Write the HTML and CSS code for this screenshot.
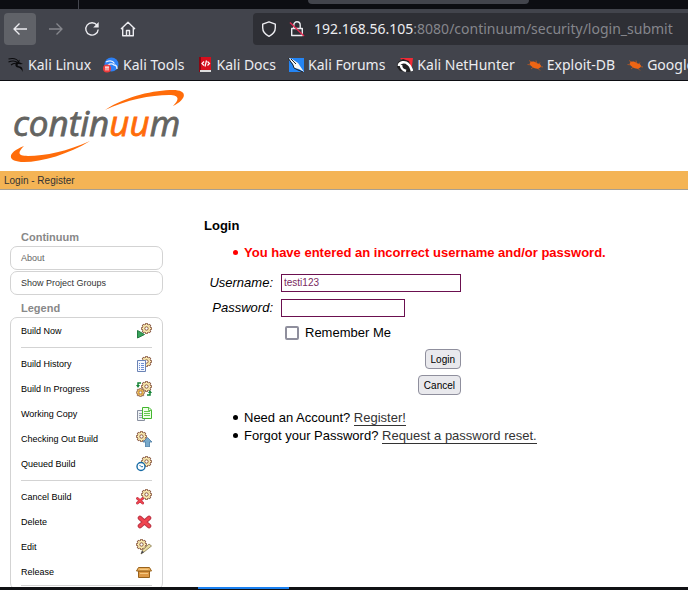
FILE: index.html
```html
<!DOCTYPE html>
<html lang="en">
<head>
<meta charset="utf-8">
<title>Continuum - Login</title>
<link rel="stylesheet" href="styles.css">
</head>
<body>
<svg class="defs" aria-hidden="true">
  <defs>
    <g id="gear">
      <path d="M5.500 0v11M0 5.500h11M1.600 1.600l7.800 7.800M9.400 1.600l-7.800 7.800" stroke="#8a5a44" stroke-width="2.600"/>
      <circle cx="5.500" cy="5.500" r="4.200" fill="#f9e9ae" stroke="#8a5a44" stroke-width=".8"/>
      <path d="M5.500 .8v9.400M.8 5.500h9.400M2.200 2.200l6.600 6.600M8.800 2.200l-6.600 6.600" stroke="#f9e9ae" stroke-width="1.100"/>
      <circle cx="5.500" cy="5.500" r="1.700" fill="#fff" stroke="#8a5a44"/>
    </g>
    <g id="cross">
      <path d="M2.500 2.500L11.500 10.500M11.500 2.500L2.500 10.500" stroke="#b93445" stroke-width="4.600" stroke-linecap="round"/>
      <path d="M2.500 2.500L11.500 10.500M11.500 2.500L2.500 10.500" stroke="#f0444f" stroke-width="2.800" stroke-linecap="round"/>
    </g>
    <g id="bug">
      <path d="M2 3.500L6 6M.5 7.500L5 8M4 12L7 9.500M9 3.500L9.500 6M13 5.500L12 8M16 10L12 9.500M13 13.500L10.500 11" stroke="#c2581c" stroke-width=".8"/>
      <path d="M3 5.500C5 4 8 4.500 10 6.200C13 6.400 15 8.500 13.500 10C12 12.600 8 12 5.500 10C3.500 8.500 2 7 3 5.500Z" fill="#ee6514"/>
    </g>
  </defs>
</svg>

<div class="tabstrip"><span class="tab-end"></span><span class="tab-line"></span></div>
<header class="browser">
  <nav class="toolbar" aria-label="Browser">
    <button class="tool tool-active" type="button" aria-label="Back">
      <svg width="16" height="16" viewBox="0 0 16 16"><path d="M15 8H2M7.500 2.500L2 8l5.500 5.500"/></svg>
    </button>
    <button class="tool tool-dim" type="button" aria-label="Forward">
      <svg width="16" height="16" viewBox="0 0 16 16"><path d="M1 8H14M8.500 2.500L14 8l-5.500 5.500"/></svg>
    </button>
    <button class="tool" type="button" aria-label="Reload">
      <svg width="16" height="16" viewBox="0 0 16 16"><path d="M13 4.200A6.200 6.200 0 1 0 14.200 8.500"/><path class="solid" d="M14.700 1v5.500H9.200z"/></svg>
    </button>
    <button class="tool" type="button" aria-label="Home">
      <svg width="16" height="16" viewBox="0 0 16 16"><path d="M1 8L8 1.200l7 6.800M2.700 6.800v7.900h10.600v-7.900M6.500 14.500V9.500h3v5"/></svg>
    </button>
    <div class="address">
      <svg width="16" height="16" viewBox="0 0 16 16"><path d="M8 .8l6.300 2.400v3.600c0 4-2.500 6.700-6.300 8.500C4.200 13.500 1.700 10.800 1.700 6.800V3.200z"/></svg>
      <svg width="16" height="16" viewBox="0 0 16 16"><path d="M4.800 7V4a3.200 3.200 0 0 1 6.400 0v3M2.700 7.500h10.600v7H2.700z"/><path class="strike" d="M1 1.500L15 15"/></svg>
      <span class="url"><b>192.168.56.105</b>:8080/continuum/security/login_submit</span>
    </div>
  </nav>
  <nav class="bookmarks" aria-label="Bookmarks">
    <a href="#"><svg width="16" height="16" viewBox="0 0 16 16"><path d="M.5 2C5 .8 9 2 11 5M.5 5C4 3.500 8 4 10 6M3 8C6 5.500 9 6 10 7" fill="none" stroke="#0b0b0d" stroke-width="1.100"/><path d="M9 5l3-2.500-1 2.500 4 2L12 7.200C9 6.500 8.500 8.600 11 9.200c3 .4 4 2 3.500 5.800-1-3-2-3.600-4.500-4.400C7 10 6.500 7 9 5z" fill="#0b0b0d"/></svg>Kali Linux</a>
    <a href="#"><svg width="16" height="16" viewBox="0 0 16 16"><circle cx="8.500" cy="7.500" r="7" fill="#2d80f5"/><path d="M3 5c4-2 7-1 8.500 1.500M5 8c3-2 5-1 6 0 3 0 3 3 3 4" fill="none" stroke="#e8f1ff" stroke-width="1.300"/><circle cx="4" cy="11.500" r="4" fill="#ef3b3b"/><path d="M2 10h4M3 10v3.500M5 10v3.500" stroke="#fff"/></svg>Kali Tools</a>
    <a href="#"><svg width="16" height="16" viewBox="0 0 16 16"><path d="M2 0h12v13H2z" fill="#d70f1d"/><path d="M2 0h2v15H2z" fill="#8a0712"/><path d="M3 13h11v2H3z" fill="#ddd"/><path d="M7 4.500L5 6.500l2 2M10.500 4.500l2 2-2 2M9.500 3.500l-1.500 6" fill="none" stroke="#fff" stroke-width="1.200"/></svg>Kali Docs</a>
    <a href="#"><svg width="16" height="16" viewBox="0 0 16 16"><path d="M1 1h15v14H1z" fill="#2485f5"/><path d="M0 1l4 1 6 4 2 3 4 6-5-3-5-1-1-4z" fill="#f6f6f6"/><path d="M0 1l5 7 1 3 4 2 5 2M3 2l5 5" fill="none" stroke="#222"/></svg>Kali Forums</a>
    <a href="#"><svg width="16" height="16" viewBox="0 0 16 16"><path d="M3 1h13l-1.500 12z" fill="#f02a35"/><path d="M1 5l5-3 6 2 3 10-3 1-9-1-3-4z" fill="#202022"/><path d="M2 9c0-4 6-5 9-2 3 2 3 4 4 7M4 8c0 4 2 5 5 6" fill="none" stroke="#fff" stroke-width="2.600"/></svg>Kali NetHunter</a>
    <a href="#"><svg width="16" height="16" viewBox="0 0 16 16"><use href="#bug"/></svg>Exploit-DB</a>
    <a href="#"><svg width="16" height="16" viewBox="0 0 16 16"><use href="#bug"/></svg>Google Hacking DB</a>
  </nav>
</header>

<div class="page">
  <div class="banner">
    <svg width="176" height="76" viewBox="0 0 176 76" role="img" aria-label="continuum">
      <path d="M95 20C116 6 145 0 163 0c15 0 14 9 0 16 7-7 6-11-4-11-18 0-43 5-64 15z" fill="#ff6c0a"/>
      <path d="M80 51C59 64 32 72 14 72c-17 0-18-9 0-16-7 7-6 10 4 10 17 0 40-5 62-15z" fill="#ff6c0a"/>
      <text class="wordmark" x="3" y="46">contin<tspan class="accent">uu</tspan>m</text>
    </svg>
  </div>
  <div class="crumbs"><a href="#">Login</a> - <a href="#">Register</a></div>

  <div class="columns">
    <aside class="sidebar">
      <h2>Continuum</h2>
      <a class="menu-link muted" href="#">About</a>
      <a class="menu-link" href="#">Show Project Groups</a>
      <h2>Legend</h2>
      <div class="legend">
        <div class="entry">Build Now<svg width="16" height="16" viewBox="0 0 16 16"><use href="#gear" x="5"/><path d="M1.500 7.500l7 4-7 3.500z" fill="#39a35c" stroke="#247b40"/></svg></div>
        <hr>
        <div class="entry">Build History<svg width="16" height="16" viewBox="0 0 16 16"><use href="#gear" x="5"/><path d="M1.500 4.500h8v11h-8z" fill="#f5f8ff" stroke="#6b83b5"/><path d="M3 7.500h1m1 0h3M3 9.500h1m1 0h3M3 11.500h1m1 0h3M3 13.500h1m1 0h3" stroke="#6d8fd1"/></svg></div>
        <div class="entry">Build In Progress<svg width="16" height="16" viewBox="0 0 16 16"><use href="#gear" x="5"/><g transform="translate(0 7) scale(.82)"><use href="#gear"/><circle cx="5.500" cy="5.500" r="2.800" fill="none" stroke="#e0a840" stroke-width="1.500"/></g><path d="M5 2H2v3M11 14h3v-3" fill="none" stroke="#168437" stroke-width="1.500"/><path d="M0 4h4L2 7zM12 12h4l-2-3z" fill="#168437"/></svg></div>
        <div class="entry">Working Copy<svg width="16" height="16" viewBox="0 0 16 16"><path d="M1.500 4.500h7v10h-7z" fill="#eef2f5" stroke="#888f9f"/><path d="M3 7.500h4M3 9.500h4M3 11.500h4" stroke="#97a0b4"/><path d="M6.500 1.500H13l2.500 2.500v8.500h-9z" fill="#efffe9" stroke="#43b62f"/><path d="M8 5.500h6M8 7.500h6M8 9.500h6M12.500 1.500v3h3" fill="none" stroke="#65c651"/></svg></div>
        <div class="entry">Checking Out Build<svg width="16" height="16" viewBox="0 0 16 16"><use href="#gear"/><path d="M11.500 6.500L16 11h-2.500v5h-4v-5H7z" fill="#79aacb" stroke="#4d7ca3" stroke-width=".8"/></svg></div>
        <div class="entry">Queued Build<svg width="16" height="16" viewBox="0 0 16 16"><use href="#gear" x="5"/><circle cx="5" cy="10.500" r="4" fill="#fff" stroke="#176ba5" stroke-width="1.400"/><path d="M3.500 9l1.700 1.700H7" fill="none" stroke="#176ba5"/></svg></div>
        <hr>
        <div class="entry">Cancel Build<svg width="16" height="16" viewBox="0 0 16 16"><use href="#gear" x="5"/><g transform="translate(0 8) scale(.58)"><use href="#cross"/></g></svg></div>
        <div class="entry">Delete<svg width="16" height="16" viewBox="0 0 16 16"><use href="#cross" x="1.500" y="1.500"/></svg></div>
        <div class="entry">Edit<svg width="16" height="16" viewBox="0 0 16 16"><use href="#gear"/><path d="M5 15l1.500-4L13 5l2.500 2L8 13z" fill="#e8dba0" stroke="#85764b" stroke-width=".8"/><path d="M5 15l1-3 2 1z" fill="#333850"/></svg></div>
        <div class="entry">Release<svg width="16" height="16" viewBox="0 0 16 16"><path d="M2.500 7h11v6.500h-11z" fill="#dd9845" stroke="#98621c"/><path d="M2.500 3.500h11L15.500 7h-15z" fill="#edb25e" stroke="#98621c"/><path d="M4 5.500h8M4 9.500h8" stroke="#f6c981"/></svg></div>
        <hr class="tight">
      </div>
    </aside>

    <main class="content">
      <h1>Login</h1>
      <ul class="errors"><li>You have entered an incorrect username and/or password.</li></ul>
      <form class="login">
        <label for="username">Username:</label>
        <input class="field" id="username" type="text" value="testi123">
        <label for="password">Password:</label>
        <input class="field field-short" id="password" type="password">
        <div class="remember"><input id="remember" type="checkbox"><label for="remember">Remember Me</label></div>
        <div class="actions"><button type="submit">Login</button><button type="button">Cancel</button></div>
      </form>
      <ul class="help">
        <li>Need an Account? <a href="#">Register!</a></li>
        <li>Forgot your Password? <a href="#">Request a password reset.</a></li>
      </ul>
    </main>
  </div>
</div>
<footer class="taskbar"><span class="task"></span></footer>
</body>
</html>
```
FILE: styles.css
```css
* { box-sizing: border-box; }
body {
  margin: 0;
  height: 100vh;
  display: flex;
  flex-direction: column;
  overflow: hidden;
  background: #fff;
  color: #000;
  font: 13px/18px "Liberation Sans", Arial, sans-serif;
}
svg { flex: none; display: block; }
.defs { position: absolute; width: 0; height: 0; }

/* Browser frame */
.tabstrip {
  flex: none;
  display: flex;
  height: 9px;
  background: #0c0d12;
}
.tab-end { width: 79px; border-right: 1px solid #44464e; }
.tab-line { width: 221px; height: 4px; margin-left: 229px; background: #42444c; border-radius: 0 0 4px 4px; }
.browser {
  flex: none;
  background: #42444c;
  border-bottom: 1px solid #0c0d12;
  color: #ececf0;
  font: 14px/20px "Noto Sans", sans-serif;
}
.toolbar { display: flex; gap: 4px; padding: 4px 0 4px 4px; }
.tool {
  flex: none;
  display: flex;
  align-items: center;
  justify-content: center;
  width: 32px;
  height: 32px;
  padding: 0;
  border: 0;
  border-radius: 4px;
  background: none;
}
.tool-active { background: #606268; }
.tool-dim { opacity: .4; }
.toolbar svg { fill: none; stroke: #ececf0; stroke-width: 1.4; stroke-linejoin: round; }
.toolbar .solid { fill: #ececf0; stroke: none; }
.toolbar .strike { stroke: #e22850; }
.address {
  flex: 1;
  min-width: 0;
  display: flex;
  align-items: center;
  gap: 12px;
  height: 32px;
  margin-left: 105px;
  padding-left: 8px;
  border-radius: 4px 0 0 4px;
  background: #2e2f35;
  overflow: hidden;
}
.url { margin-left: -3px; color: #85868c; white-space: nowrap; }
.url b { color: #ececf0; font-weight: 400; }
.bookmarks {
  display: flex;
  gap: 12px;
  height: 31px;
  padding: 0 0 0 8px;
  align-items: center;
  overflow: hidden;
}
.bookmarks a {
  flex: none;
  display: flex;
  align-items: center;
  gap: 4px;
  color: #ececf0;
  text-decoration: none;
}

/* Continuum page */
.page { flex: 1; min-height: 0; overflow: hidden; }
.banner { padding: 9px 10px 5px; }
.wordmark {
  fill: #646461;
  stroke: #646461;
  stroke-width: .8;
  font: italic 35px "Open Sans", sans-serif;
}
.accent { fill: #ff6c0a; stroke: #ff6c0a; }
.crumbs {
  height: 19px;
  padding: 0 4px;
  background: #f4b455;
  border-bottom: 1px solid #a79f91;
  color: #333;
  font-size: 10px;
  line-height: 20px;
}
.crumbs a { color: #333; text-decoration: none; }
.columns { display: flex; align-items: flex-start; }
.sidebar {
  flex: none;
  width: 153px;
  margin: 35px 41px 0 10px;
  font-size: 9px;
}
.sidebar h2 {
  margin: 0;
  padding: 3px 11px 0;
  color: #888;
  font-size: 11px;
  line-height: 18px;
}
.menu-link {
  display: block;
  height: 24px;
  margin-bottom: 1px;
  padding-left: 10px;
  border: 1px solid #d3d3d3;
  border-radius: 7px;
  color: #333;
  line-height: 22px;
  text-decoration: none;
}
.menu-link.muted { color: #666; }
.legend {
  padding: 0 10px;
  border: 1px solid #d3d3d3;
  border-radius: 7px;
}
.entry { display: flex; align-items: center; justify-content: space-between; height: 25px; }
.legend hr { height: 1px; margin: 4px 0 3px; border: 0; background: #d3d3d3; }
.legend .tight { margin-top: 1px; }

.content { flex: 1; min-width: 0; padding-top: 27px; }
.content h1 { margin: 0; font-size: 13px; line-height: 18px; }
.content ul { margin: 0; padding-left: 40px; list-style: none; }
.content li::before {
  content: "";
  display: inline-block;
  width: 5px;
  height: 5px;
  margin: 0 6px 2px -11px;
  border-radius: 50%;
  background: currentColor;
}
.content .errors { margin-top: 9px; color: #f00; font-weight: 700; }
.login {
  display: grid;
  grid-template-columns: 69px 180px;
  column-gap: 8px;
  grid-auto-rows: minmax(25px, auto);
  align-items: center;
  margin-top: 8px;
}
.login > label { font-style: italic; text-align: right; }
.field {
  width: 180px;
  height: 18px;
  padding: 0 2px;
  border: 1px solid #6b0f4f;
  border-radius: 0;
  outline: 0;
  background: #fff;
  color: #7a2a60;
  font: 10px "Liberation Sans", Arial, sans-serif;
}
.field-short { width: 124px; }
.remember { grid-column: 2; display: flex; align-items: center; gap: 6px; padding-left: 4px; }
.remember input {
  appearance: none;
  width: 14px;
  height: 14px;
  margin: 0;
  border: 2px solid #8f8f9d;
  border-radius: 2px;
  background: #fff;
}
.actions {
  grid-column: 2;
  display: flex;
  flex-direction: column;
  align-items: flex-end;
  gap: 6px;
  padding-top: 4px;
}
.actions button {
  height: 20px;
  padding: 0 5px;
  border: 1px solid #8f8f9d;
  border-radius: 4px;
  background: #e9e9ed;
  color: #000;
  font: 10px "Liberation Sans", Arial, sans-serif;
}
.content .help { margin-top: 14px; }
.help a { color: #333; text-decoration: none; border-bottom: 1px solid #333; }

/* Desktop panel under the window */
.taskbar { flex: none; height: 3px; padding-left: 198px; background: #101114; }
.task { display: block; width: 91px; height: 2px; background: #1a80f0; }
```
